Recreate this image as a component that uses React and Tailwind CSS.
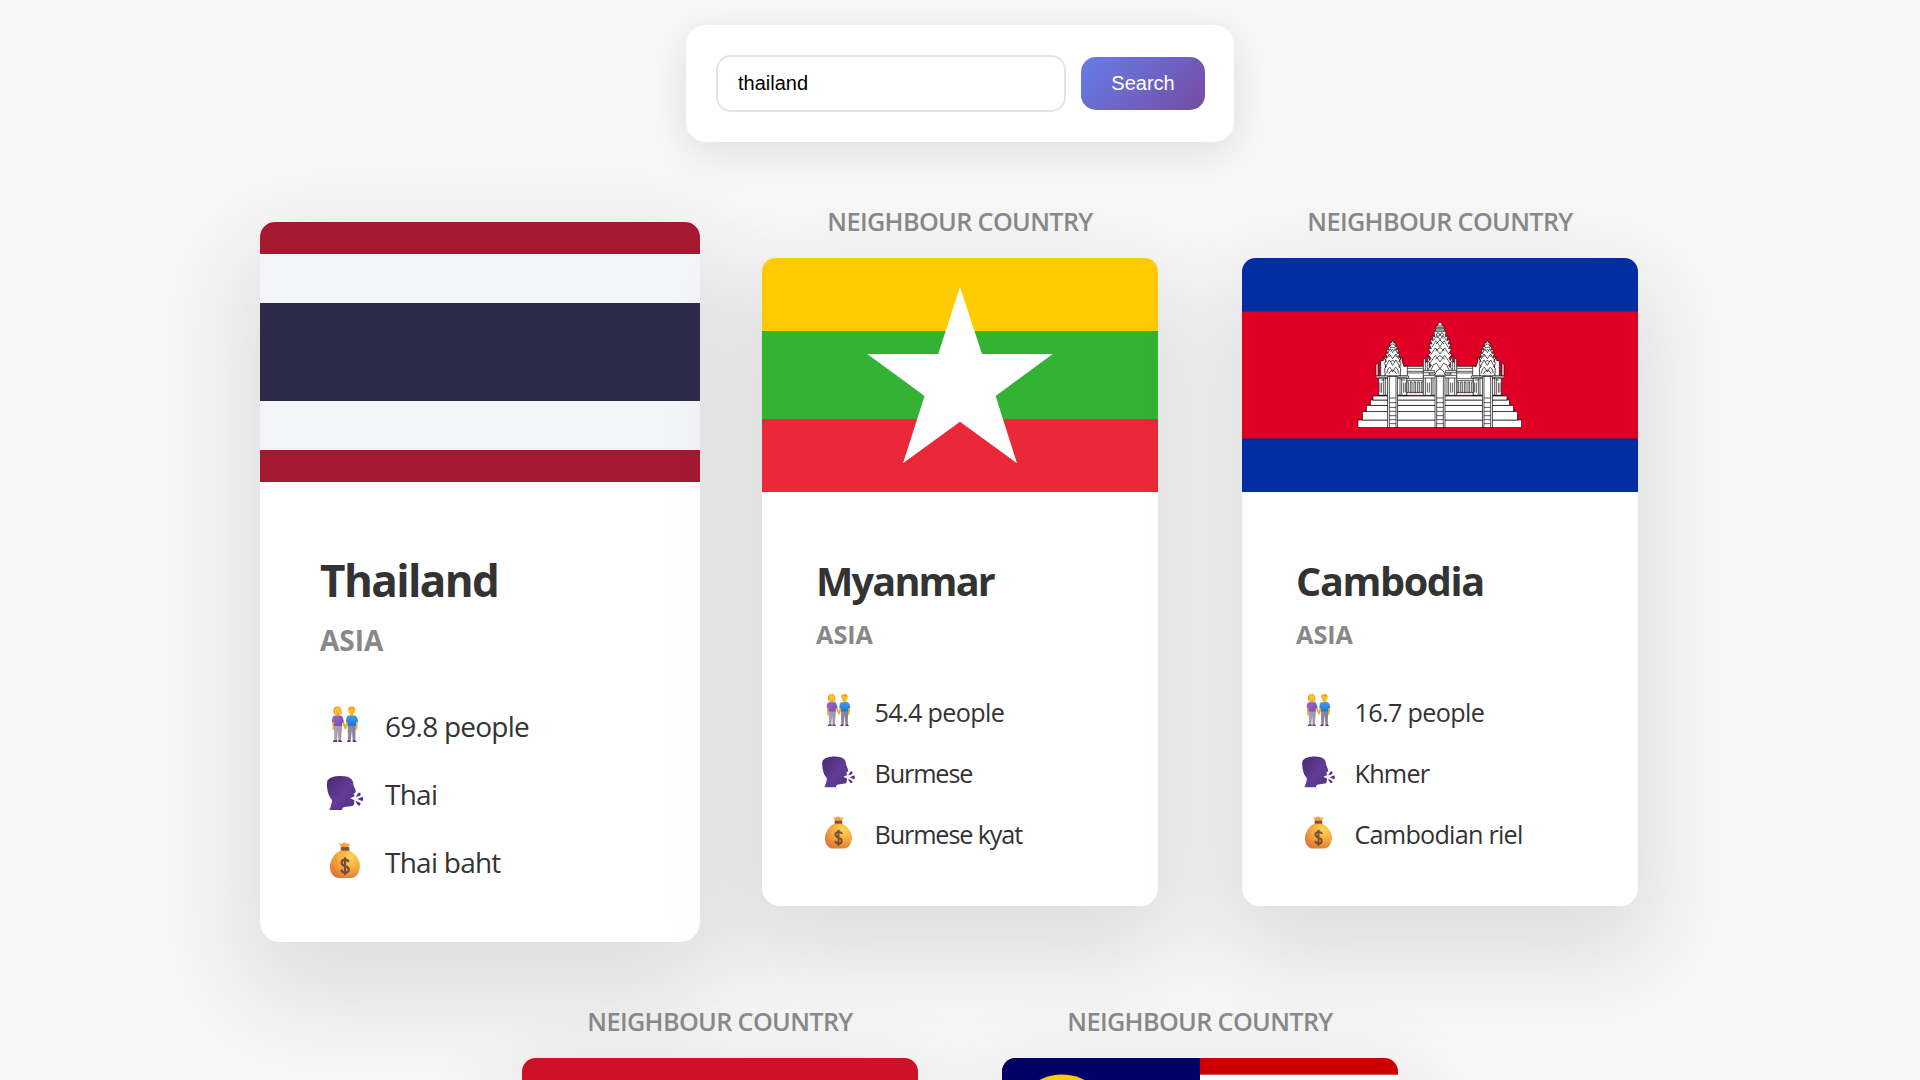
import React, { useState } from "react";

function ThailandFlag() {
  return (
    <svg viewBox="0 0 440 260" className="block h-full w-full" preserveAspectRatio="none" shapeRendering="crispEdges">
      <rect width="440" height="260" fill="#A51931" />
      <rect y="32" width="440" height="196" fill="#F4F5F8" />
      <rect y="81" width="440" height="98" fill="#2D2A4A" />
    </svg>
  );
}

function MyanmarFlag() {
  return (
    <svg viewBox="0 0 396 234" className="block h-full w-full" preserveAspectRatio="none">
      <rect width="396" height="234" fill="#FECB00" />
      <rect y="73" width="396" height="161" fill="#34B233" />
      <rect y="161" width="396" height="73" fill="#EA2839" />
      <path
        d="M198 29 L220 96 H290.7 L233.6 138 L255 205.3 L198 163.7 L141 205.3 L162.6 138 L105.3 96 H176.2 Z"
        fill="#fff"
      />
    </svg>
  );
}

function SideTower() {
  return (
    <g>
      <path d="M-50 228 V196 L-44 186 V228 L-36 226 V182 H-28 V172 L-22 180 V228 H22 V180 L28 172 V182 L34 200 L44 198 V228 Z" />
      <path d="M-22 228 L-24 206 L-19 200 L-25 190 L-19 184 L-25 172 L-17 172 L-21 160 L-14 160 L-19 148 L-11 150 L-14 138 L-8 140 L-8 130 L-3 128 L0 120 L3 128 L8 130 L8 140 L14 138 L11 150 L19 148 L14 160 L21 160 L17 172 L25 172 L19 184 L25 190 L19 200 L24 206 L22 228 Z" />
      <path d="M-8 138 Q0 126 8 138 M-8 142 H8 M-14 160 L-7 146 L0 158 L7 146 L14 160 M-19 178 L-10 162 L0 176 L10 162 L19 178 M-20 198 L-10 180 L0 196 L10 180 L20 198 M-18 220 L-14 206 L-8 202 L0 216 L8 202 L14 206 L18 220 M-12 222 Q0 198 12 222" />
      <path d="M-6 154 L0 148 L6 154 M-12 170 L-6 166 M12 170 L6 166 M-6 186 L0 180 L6 186" />
      <path d="M-52 228 H48 V234 H-46 Z M-42 234 H42 V286 H-42 Z M-38 248 V278 M-33 248 V278 M-27 236 V284 M-22 232 V286 M22 232 V286 M27 236 V284 M33 248 V278 M38 248 V278" />
      <path d="M-46 286 H46 M-36 240 H-26 M26 240 H38" />
    </g>
  );
}

function Stairs({ x }) {
  return (
    <g transform={`translate(${x} 0)`}>
      <rect x="-15" y="230" width="30" height="153" />
      <path d="M-10 230 V383 M10 230 V383 M-10 294 H10 M-10 308 H10 M-10 322 H10 M-10 334 H10 M-10 347 H10 M-10 359 H10 M-10 371 H10" />
    </g>
  );
}

function CambodiaFlag() {
  return (
    <svg viewBox="0 0 396 234" className="block h-full w-full" preserveAspectRatio="none">
      <rect width="396" height="234" fill="#032EA1" />
      <rect y="53.5" width="396" height="127" fill="#E00025" />
      <g transform="translate(98 42) scale(0.33333)" fill="#fff" stroke="#111" strokeWidth="2.1">
        <rect x="54" y="360" width="491" height="23" />
        <rect x="67" y="335" width="465" height="25" />
        <rect x="79" y="316" width="441" height="19" />
        <rect x="91" y="300" width="417" height="16" />
        <rect x="99" y="288" width="402" height="12" />
        <path d="M190 199 H410 V286 H190 Z M190 205 H410 M190 214 H410 M190 219 H410 M190 236 H410 M190 242 H410 M190 278 H410" />
        <path d="M200 246 V277 H205 V246 Z M211 246 V277 H216 V246 Z M222 246 V277 H227 V246 Z M233 246 V277 H238 V246 Z M244 246 V277 H249 V246 Z M351 246 V277 H356 V246 Z M362 246 V277 H367 V246 Z M373 246 V277 H378 V246 Z M384 246 V277 H389 V246 Z M395 246 V277 H400 V246 Z" />
        <g transform="translate(158 0)"><SideTower /></g>
        <g transform="translate(442 0) scale(-1 1)"><SideTower /></g>
        <path d="M250 286 V178 L256 174 V186 H262 V166 L268 180 V228 H332 V180 L338 166 V186 H344 V174 L350 178 V286 Z" />
        <path d="M268 222 L266 206 L274 196 L265 184 L273 176 L265 164 L272 158 L265 146 L274 146 L267 132 L276 132 L270 118 L280 122 L276 108 L284 110 L282 96 L286 92 L286 82 L293 76 L296 70 L300 65 L304 70 L307 76 L314 82 L314 92 L318 96 L316 110 L324 108 L320 122 L330 118 L324 132 L333 132 L326 146 L335 146 L328 158 L335 164 L327 176 L335 184 L326 196 L334 206 L332 222 Z" />
        <path d="M286 82 H314 M286 86 H314 M286 90 H314 M284 94 H316 M291 78 H309 M288 106 Q294 90 300 106 Q306 90 312 106 M282 120 L291 106 L300 120 L309 106 L318 120 M290 114 L300 104 L310 114 M275 142 L288 122 L300 140 L312 122 L325 142 M288 132 L300 120 L312 132 M272 164 L286 144 L300 162 L314 144 L328 164 M286 154 L300 142 L314 154 M271 188 L286 166 L300 186 L314 166 L329 188 M286 178 L300 166 L314 178 M272 212 L280 194 L290 190 L300 206 L310 190 L320 194 L328 212 M284 226 Q288 210 300 206 Q312 210 316 226" />
        <path d="M250 212 H284 V218 H250 Z M316 212 H350 V218 H316 Z M250 226 H350 V234 H250 Z M256 186 V212 M262 186 V212 M338 186 V212 M344 186 V212 M256 234 V286 M262 248 V278 M268 248 V278 M274 234 V286 M279 234 V286 M344 234 V286 M338 248 V278 M332 248 V278 M326 234 V286 M321 234 V286" />
        <Stairs x={158} />
        <Stairs x={300} />
        <Stairs x={442} />
      </g>
    </svg>
  );
}

function IndonesiaFlag() {
  return (
    <svg viewBox="0 0 396 234" className="block h-full w-full" preserveAspectRatio="none">
      <rect width="396" height="234" fill="#fff" />
      <rect width="396" height="117" fill="#CE1126" />
    </svg>
  );
}

function MalaysiaFlag() {
  return (
    <svg viewBox="0 0 396 234" className="block h-full w-full" preserveAspectRatio="none">
      <rect width="396" height="234" fill="#fff" />
      {[0, 2, 4, 6, 8, 10, 12].map((i) => (
        <rect key={i} y={i * 16.7} width="396" height="16.7" fill="#CC0000" />
      ))}
      <rect width="198" height="134" fill="#000066" />
      <circle cx="60" cy="65.4" r="49" fill="#FFCC00" />
      <circle cx="75" cy="65.4" r="43" fill="#000066" />
    </svg>
  );
}

function PeopleIcon() {
  return (
    <svg viewBox="0 0 150 144" className="mb-1 block h-12 w-[50px]">
      <defs>
        <linearGradient id="purpleTop" x1="0" y1="0" x2="1" y2="1">
          <stop offset="0" stopColor="#9a6fcb" />
          <stop offset="1" stopColor="#7345b8" />
        </linearGradient>
        <linearGradient id="blueTop" x1="0" y1="0" x2="0" y2="1">
          <stop offset="0" stopColor="#3f9bf0" />
          <stop offset="1" stopColor="#1c78d8" />
        </linearGradient>
        <linearGradient id="trousers" x1="0" y1="0" x2="1" y2="0">
          <stop offset="0" stopColor="#aaa2b4" />
          <stop offset="1" stopColor="#887d96" />
        </linearGradient>
      </defs>
      <path d="M36 60 L38 90 L43 90 L44 60 Z M64 62 L74 88 L79 88 L86 62 L80 60 L76 76 L70 60 Z M106 60 L107 90 L112 88 L113 60 Z" fill="#f5aa24" />
      <path d="M42 76 H66 L63 121 H55 L54 90 L51 121 H43 Z M83 76 H107 L106 121 H98 L96 90 L92 121 H84 Z" fill="url(#trousers)" />
      <path d="M42 120 H52 V126 H39 Q38 123 42 120 M55 120 H63 L67 126 H55 Z M84 120 H92 V126 H81 Q81 122 84 120 M98 120 H106 L110 126 H98 Z" fill="#633788" />
      <path d="M42 47 Q54 43 64 47 Q70 50 71 65 L66 68 V78 H42 V67 L36 65 Q35 50 42 47" fill="url(#purpleTop)" />
      <path d="M84 47 Q95 43 106 47 Q113 50 114 65 L108 67 V78 H83 V67 L78 65 Q78 50 84 47" fill="url(#blueTop)" />
      <path d="M50 40 H58 V47 Q54 51 50 47 M91 40 H99 V47 Q95 51 91 47" fill="#ee9820" />
      <path d="M40 36 Q39 20 50 20 Q64 17 65 35 Q67 42 59 44 H47 Q40 43 40 36" fill="#f29a1e" />
      <ellipse cx="53" cy="33" rx="9" ry="10" fill="#ffcb3b" />
      <ellipse cx="95" cy="32" rx="10" ry="12" fill="#ffc934" />
      <path d="M84 32 Q82 20 93 20 Q106 17 106 32 L102 28 Q94 29 88 27 Z" fill="#f6a51d" />
      <path d="M49 32 V34 M57 32 V34 M92 32 V34 M100 32 V34" stroke="#6b4731" strokeWidth="2" />
      <path d="M50 38 Q53 41 56 38 M92 38 Q96 41 99 38" fill="none" stroke="#a85c22" strokeWidth="1.5" />
    </svg>
  );
}

function SpeakingIcon() {
  return (
    <svg viewBox="0 204 150 144" className="mb-1 block h-12 w-[50px]">
      <defs>
        <linearGradient id="headFill" x1="0" y1="0" x2="1" y2="1">
          <stop offset="0" stopColor="#482b6c" />
          <stop offset="0.55" stopColor="#643b96" />
          <stop offset="1" stopColor="#503081" />
        </linearGradient>
      </defs>
      <path
        d="M23 240 Q35 228 58 228 Q86 227 95 238 Q100 244 101 257 Q108 270 107 277 L101 281 Q103 286 104 289 L91 295 L103 301 Q104 316 97 318 L73 321 Q66 323 66 330 H28 Q37 309 36 300 Q22 285 21 258 Q20 245 23 240"
        fill="url(#headFill)"
      />
      <path d="M108 291 Q113 277 119 278 Q125 281 120 287 Z M112 297 L128 290 Q131 297 128 304 Z M107 302 L121 309 Q124 314 118 317 Q111 315 107 302" fill="#54327f" />
    </svg>
  );
}

function MoneyIcon() {
  return (
    <svg viewBox="0 408 150 144" className="mb-1 block h-12 w-[50px]">
      <defs>
        <radialGradient id="bagFill" cx="0.68" cy="0.25" r="0.85">
          <stop offset="0" stopColor="#ffd558" />
          <stop offset="0.5" stopColor="#f5aa3c" />
          <stop offset="1" stopColor="#df7138" />
        </radialGradient>
      </defs>
      <path d="M64 442 L57 431 Q60 429 66 433 Q69 427 74 428 Q79 427 82 433 Q88 428 91 432 L85 442 Z" fill="#f6a43d" />
      <path d="M64 451 H86 Q101 457 113 475 Q124 495 117 513 Q111 534 93 534 H57 Q39 534 32 514 Q26 496 37 475 Q48 456 64 451" fill="url(#bagFill)" />
      <rect x="62" y="441" width="26" height="11" rx="3" fill="#87513a" />
      <path d="M86 486 Q84 479 75 479 Q65 479 65 488 Q65 495 75 498 Q86 501 86 509 Q86 518 75 518 Q65 518 64 509 M75 472 V525" fill="none" stroke="#784a39" strokeWidth="6.5" />
    </svg>
  );
}

function Row({ icon, tracking = "tracking-[-0.75px]", children }) {
  return (
    <li className="flex h-[68px] items-center gap-[15px]">
      {icon}
      <span className={"text-[28px] leading-[38px] " + tracking}>{children}</span>
    </li>
  );
}

function CountryCard({ country, neighbour }) {
  const { name, region, people, language, currency, nameTracking, textTracking, Flag } = country;
  return (
    <article
      className={
        "h-[720px] w-[440px] shrink-0 rounded-[20px] bg-white shadow-[0_40px_100px_20px_rgba(0,0,0,0.1)]" +
        (neighbour ? " relative scale-90" : "")
      }
    >
      {neighbour && (
        <p className="absolute -top-[60px] left-0 w-full text-center text-[28px] leading-[38px] font-semibold tracking-[-0.7px] whitespace-nowrap text-[#888] uppercase">
          Neighbour country
        </p>
      )}
      <div className="h-[260px] overflow-hidden rounded-t-[15px]">
        <Flag />
      </div>
      {name && (
        <div className="px-[60px] pt-[68px]">
          <h3 className={"text-[44px] leading-[60px] font-bold " + nameTracking}>{name}</h3>
          <h4 className="mt-[11px] text-[28px] leading-[38px] font-bold text-[#888] uppercase">{region}</h4>
          <ul className="mt-[33px]">
            <Row icon={<PeopleIcon />}>{people} people</Row>
            <Row icon={<SpeakingIcon />} tracking={textTracking}>{language}</Row>
            <Row icon={<MoneyIcon />} tracking={textTracking}>{currency}</Row>
          </ul>
        </div>
      )}
    </article>
  );
}

const thailand = {
  name: "Thailand", region: "Asia", people: "69.8", language: "Thai", currency: "Thai baht",
  nameTracking: "tracking-[-1.6px]", Flag: ThailandFlag,
};
const myanmar = {
  name: "Myanmar", region: "Asia", people: "54.4", language: "Burmese", currency: "Burmese kyat",
  nameTracking: "tracking-[-2px]", textTracking: "tracking-[-1.25px]", Flag: MyanmarFlag,
};
const cambodia = {
  name: "Cambodia", region: "Asia", people: "16.7", language: "Khmer", currency: "Cambodian riel",
  nameTracking: "tracking-[-1.5px]", textTracking: "tracking-[-0.85px]", Flag: CambodiaFlag,
};

export default function App() {
  const [query, setQuery] = useState("thailand");
  return (
    <main className="flex h-screen flex-col items-center overflow-hidden bg-[#f7f7f7] pt-[25px] font-['Open_Sans','Noto_Sans',sans-serif] text-[#333]">
      <form
        className="flex shrink-0 items-center gap-[15px] rounded-[20px] bg-white py-[30px] pr-[29px] pl-[30px] font-['Liberation_Sans',Arial,sans-serif] text-[20px] leading-[23px] shadow-[0_10px_40px_rgba(0,0,0,0.1)]"
        onSubmit={(e) => e.preventDefault()}
      >
        <input
          type="text"
          aria-label="Country"
          value={query}
          onChange={(e) => setQuery(e.target.value)}
          className="h-[57px] w-[350px] rounded-[15px] border-2 border-[#e1e5e9] bg-white px-5 text-black outline-none"
        />
        <button type="submit" className="h-[53px] w-[124px] rounded-[15px] bg-[linear-gradient(135deg,#667eea_0%,#764ba2_100%)] text-white">
          Search
        </button>
      </form>
      <section className="mt-20 flex shrink-0 justify-center gap-10">
        <CountryCard country={thailand} />
        <CountryCard country={myanmar} neighbour />
        <CountryCard country={cambodia} neighbour />
      </section>
      <section className="mt-20 flex shrink-0 justify-center gap-10">
        <CountryCard country={{ Flag: IndonesiaFlag }} neighbour />
        <CountryCard country={{ Flag: MalaysiaFlag }} neighbour />
      </section>
    </main>
  );
}
